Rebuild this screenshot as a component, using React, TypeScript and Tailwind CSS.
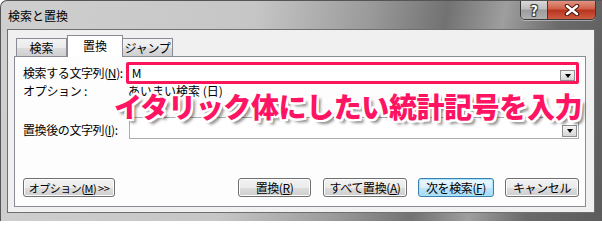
import React from "react";

function Dropdown({ h }: { h: string }) {
  return (
    <div
      className={`w-[15px] ${h} border border-[#8e8f8f] bg-[linear-gradient(180deg,#f4f4f4_0%,#e6e6e6_50%,#d4d4d4_100%)] flex items-center justify-center shrink-0`}
    >
      <div className="w-0 h-0 border-l-[3.5px] border-r-[3.5px] border-t-[4px] border-l-transparent border-r-transparent border-t-black" />
    </div>
  );
}

function Btn({
  w,
  children,
  primary,
  className = "",
  textClass = "tracking-[-0.4px]",
}: {
  w: string;
  children: React.ReactNode;
  primary?: boolean;
  className?: string;
  textClass?: string;
}) {
  return (
    <div
      className={`${w} h-[19px] rounded-[3px] border ${
        primary
          ? "border-[#3c7fb1] shadow-[inset_0_0_0_1px_#a5e6fd] bg-[linear-gradient(180deg,#eaf6fd_0%,#d9f0fc_50%,#bee6fd_51%,#a7d9f5_100%)]"
          : "border-[#707070] shadow-[inset_0_0_0_1px_#fcfcfc] bg-[linear-gradient(180deg,#f2f2f2_0%,#ebebeb_50%,#dddddd_51%,#cfcfcf_100%)]"
      } flex items-center justify-center text-[12px] leading-[14px] text-black ${className}`}
    >
      <span className={`whitespace-nowrap ${textClass}`}>{children}</span>
    </div>
  );
}

export default function App() {
  const outline =
    "[text-shadow:2px_0_0_#fff,-2px_0_0_#fff,0_2px_0_#fff,0_-2px_0_#fff,2px_2px_0_#fff,-2px_-2px_0_#fff,2px_-2px_0_#fff,-2px_2px_0_#fff,1px_2px_0_#fff,2px_1px_0_#fff,-1px_2px_0_#fff,-2px_1px_0_#fff,1px_-2px_0_#fff,2px_-1px_0_#fff,-1px_-2px_0_#fff,-2px_-1px_0_#fff,4px_4px_3px_rgba(0,0,0,0.45)]";
  return (
    <div className="relative w-[602px] h-[221px] overflow-hidden rounded-tl-[7px] border-t border-l border-[#555] bg-[linear-gradient(100deg,#cfcfcf_0%,#c6c6c6_40%,#9a9a9a_58%,#727272_70%,#9e9e9e_79%,#6a6a6a_88%,#5c5c5c_100%)] [font-family:'Noto_Sans_CJK_JP','Noto_Sans',sans-serif] text-black flex flex-col">
      {/* title bar */}
      <div className="h-[28px] flex justify-between pl-[7px] pr-[6px]">
        <span className="pt-[8px] text-[12px] leading-[14px] text-black">検索と置換</span>
        <div className="flex h-[20px] -mt-[1px] rounded-b-[5px] border border-t-0 border-[#3a3a3a] overflow-hidden shadow-[0_1px_0_rgba(255,255,255,0.4)]">
          <div className="w-[27px] h-full border-r border-[#3a3a3a] bg-[linear-gradient(180deg,#dcdcdc_0%,#bdbdbd_48%,#9c9c9c_52%,#b0b0b0_100%)] flex items-center justify-center text-white font-bold text-[14px] leading-[14px] [text-shadow:0_0_2px_#333,1px_1px_0_#444,-1px_-1px_0_#444,1px_-1px_0_#444,-1px_1px_0_#444]">
            ?
          </div>
          <div className="w-[47px] h-full bg-[linear-gradient(180deg,#e39a88_0%,#d0624c_45%,#b8351e_55%,#cf5c42_100%)] flex items-center justify-center">
            <svg width="16" height="12" viewBox="0 0 16 12">
              <path d="M3 2 L13 10 M13 2 L3 10" stroke="#4a1a12" strokeWidth="4.5" strokeLinecap="round" />
              <path d="M3 2 L13 10 M13 2 L3 10" stroke="#ffffff" strokeWidth="2.4" strokeLinecap="round" />
            </svg>
          </div>
        </div>
      </div>

      {/* client area */}
      <div className="ml-[6px] w-[588px] h-[184px] border border-[#6f6f6f] bg-[#f0f0f0] flex flex-col">
        {/* tabs */}
        <div className="mt-[5px] h-[21px] pl-[8px] flex items-end">
          <div className="w-[51px] h-[18px] border border-b-0 border-[#898c95] bg-[linear-gradient(180deg,#f3f3f3_0%,#ebebeb_50%,#dddddd_51%,#cfcfcf_100%)] flex items-center justify-center text-[12px] leading-[14px]">
            検索
          </div>
          <div className="relative z-10 w-[56px] h-[22px] -mb-[1px] border border-b-0 border-[#898c95] bg-white flex items-center justify-center text-[12px] leading-[14px] pb-[1px]">
            置換
          </div>
          <div className="w-[50px] h-[18px] border border-b-0 border-l-0 border-[#898c95] bg-[linear-gradient(180deg,#f3f3f3_0%,#ebebeb_50%,#dddddd_51%,#cfcfcf_100%)] flex items-center justify-center text-[12px] leading-[14px] tracking-[-0.3px]">
            ジャンプ
          </div>
        </div>

        {/* panel */}
        <div className="ml-[6px] w-[572px] h-[151px] border border-[#898c95] bg-[#fdfdfd] flex flex-col pl-[8px] pr-[6px]">
          {/* row 1 */}
          <div className="mt-[5px] flex items-center h-[22px]">
            <div className="w-[103px] text-[12px] leading-[14px] whitespace-nowrap tracking-[-0.4px]">
              検索する文字列(<span className="underline">N</span>):
            </div>
            <div className="w-[455px] h-[22px] border-[3px] border-[#fe1459] rounded-[2px] bg-white flex items-end justify-between pl-[3px] pr-[1px]">
              <span className="self-center text-[12px] leading-[14px]">M</span>
              <Dropdown h="h-[11px]" />
            </div>
          </div>
          {/* row 2 */}
          <div className="flex h-[14px] items-center">
            <div className="w-[105px] text-[12px] leading-[14px] whitespace-nowrap tracking-[-0.3px]">オプション :</div>
            <div className="text-[12px] leading-[14px] whitespace-nowrap">あいまい検索 (日)</div>
          </div>
          {/* row 3 */}
          <div className="mt-[19px] flex items-start h-[22px]">
            <div className="w-[106px] mt-[6px] text-[12px] leading-[14px] whitespace-nowrap tracking-[-0.4px]">
              置換後の文字列(<span className="underline">I</span>):
            </div>
            <div className="w-[451px] h-[22px] border border-[#abadb3] bg-white flex items-end justify-end p-[1px]">
              <Dropdown h="h-[12px]" />
            </div>
          </div>
          {/* buttons */}
          <div className="mt-[39px] flex">
            <Btn w="w-[92px]" textClass="text-[11px] tracking-[-0.5px]">
              オプション(<span className="underline">M</span>) &gt;&gt;
            </Btn>
            <div className="ml-auto flex">
              <Btn w="w-[73px]">
                置換(<span className="underline">R</span>)
              </Btn>
              <Btn w="w-[84px]" className="ml-[12px]">
                すべて置換(<span className="underline">A</span>)
              </Btn>
              <Btn w="w-[76px]" primary className="ml-[11px]">
                次を検索(<span className="underline">F</span>)
              </Btn>
              <Btn w="w-[74px]" className="ml-[11px]">
                キャンセル
              </Btn>
            </div>
          </div>
        </div>
      </div>

      {/* annotation overlay */}
      <div
        className={`absolute left-[113px] top-[91px] text-[28px] leading-[28px] font-black tracking-[-0.4px] text-[#fe1463] whitespace-nowrap ${outline}`}
      >
        イタリック体にしたい統計記号を入力
      </div>
    </div>
  );
}
